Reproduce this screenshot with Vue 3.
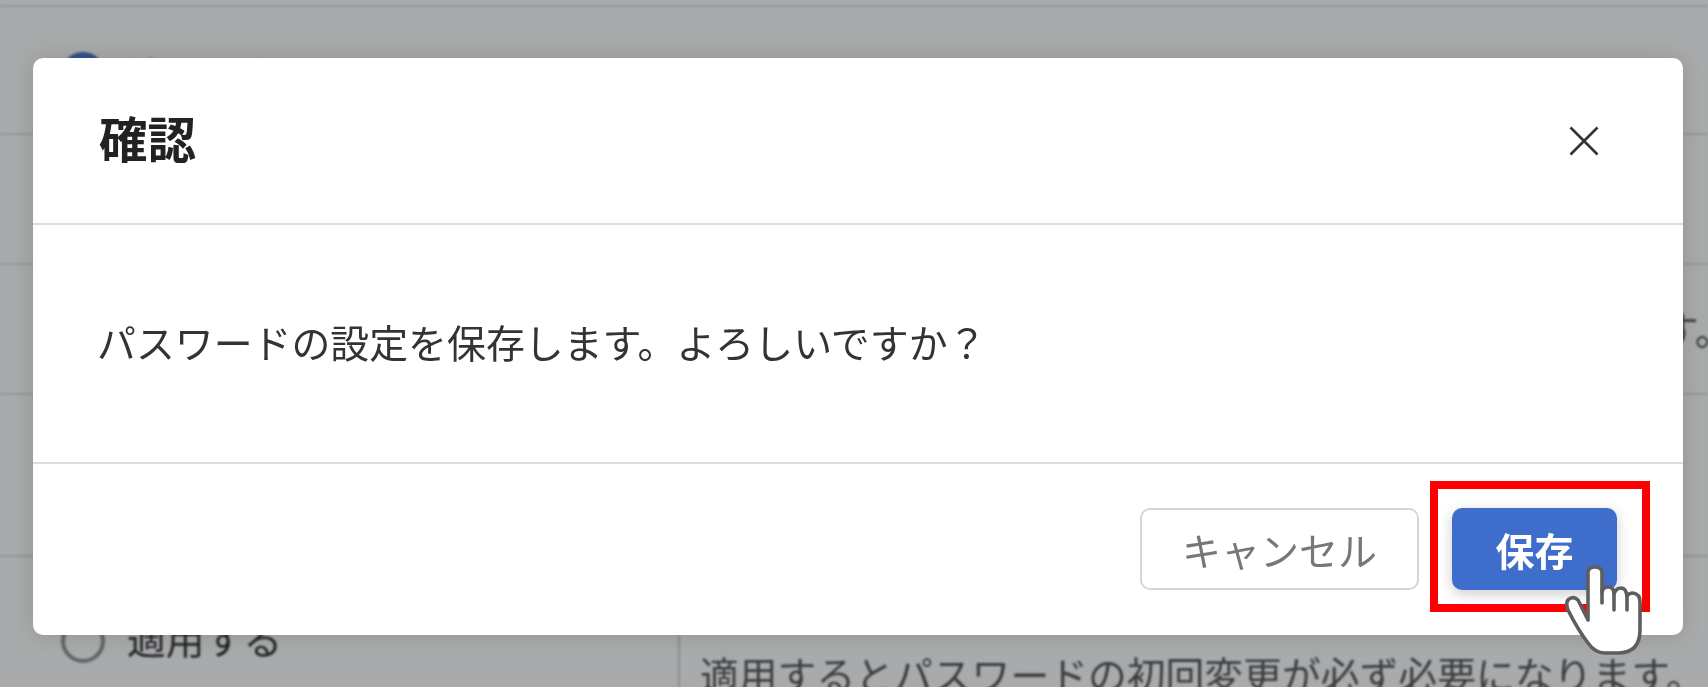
<script setup>
const rows = [
  { id: 1, cls: 'row-a', label: '適用しない', checked: true, detail: '' },
  { id: 2, cls: 'row-b', label: '', checked: false, detail: '' },
  { id: 3, cls: 'row-c', label: '', checked: false, detail: '適用しない場合は、初回変更を保存するかを選択できます。' },
  { id: 4, cls: 'row-d', label: '', checked: false, detail: '' },
  { id: 5, cls: 'row-e', label: '適用する', checked: false, detail: '適用するとパスワードの初回変更が必ず必要になります。' }
]
</script>

<template>
  <div class="screen">
    <div class="page">
      <div class="cap"></div>
      <div v-for="r in rows" :key="r.id" class="row" :class="r.cls">
        <div class="label">
          <template v-if="r.label">
            <span class="radio" :class="{ on: r.checked }"></span>
            <span>{{ r.label }}</span>
          </template>
        </div>
        <div class="detail"><span v-if="r.detail">{{ r.detail }}</span></div>
      </div>
    </div>
    <div class="overlay"></div>
    <section class="modal">
      <header class="head">
        <h2 class="title">確認</h2>
        <svg class="close" viewBox="0 0 30 30" aria-hidden="true">
          <path d="M1.5 1.5 28.5 28.5M28.5 1.5 1.5 28.5" />
        </svg>
      </header>
      <div class="body">パスワードの設定を保存します。よろしいですか？</div>
      <footer class="foot">
        <button class="btn cancel" type="button">キャンセル</button>
        <button class="btn save" type="button">保存</button>
      </footer>
    </section>
    <div class="mark"></div>
    <svg class="hand" viewBox="0 0 104 120" aria-hidden="true">
      <path class="palm" d="M48 80 L48 33 Q48 27 55 27 Q62 27 62 33 L62 52 Q63 47 68 47 Q74 47 74 54 Q76 48 81 48 Q86 48 87 56 Q89 53 93 53 Q100 54 100 62 L100 90 Q100 113 78 113 L65 113 Q55 113 48 103 Q38 90 28 70 Q25 62 29 59 Q34 56 38 60 Z" />
      <path class="palm" d="M62 50 L62 63M74 54 L74 70M87 56 L87 70" />
    </svg>
  </div>
</template>

<style scoped>
.screen {
  position: relative;
  width: 1708px;
  height: 687px;
  overflow: hidden;
  background: #fff;
  font-family: "Noto Sans CJK JP", "Noto Sans", sans-serif;
}
.page {
  display: flex;
  flex-direction: column;
  height: 687px;
  filter: blur(0.8px);
  color: #222;
  font-size: 38.8px;
  line-height: 46px;
  font-weight: 400;
}
.cap {
  height: 5px;
  flex: none;
}
.row {
  display: grid;
  grid-template-columns: 678px 1fr;
  box-sizing: border-box;
  border-top: 2px solid #dfdfdf;
  flex: none;
}
.row-a { height: 128px; }
.row-b { height: 130px; }
.row-c { height: 130px; }
.row-d { height: 162px; }
.row-e { height: 132px; }
.label {
  display: flex;
  align-items: flex-start;
  gap: 22px;
  padding-left: 61px;
}
.row-a .label { padding-top: 44px; }
.row-e .label { padding-top: 57px; }
.radio {
  flex: none;
  box-sizing: border-box;
  width: 44px;
  height: 44px;
  border-radius: 50%;
  border: 4px solid #8b8c8e;
  background: #fff;
  margin-top: 1px;
}
.row-e .radio { margin-top: 5px; }
.radio.on {
  border: 13px solid #3f6fd0;
}
.detail {
  padding-left: 20px;
  white-space: nowrap;
  color: #4a4a4a;
}
.row-c .detail { padding: 40px 0 0 12px; }
.row-e .detail {
  border-left: 2px dotted #a0a0a0;
  padding-top: 93px;
}
.overlay {
  position: absolute;
  inset: 0;
  background: rgba(40, 42, 46, 0.4);
}
.modal {
  position: absolute;
  left: 33px;
  top: 58px;
  width: 1650px;
  height: 577px;
  display: flex;
  flex-direction: column;
  background: #fff;
  border-radius: 10px;
  box-shadow: 0 0 22px rgba(0, 0, 0, 0.14);
  filter: blur(0.6px);
}
.head {
  flex: none;
  height: 167px;
  box-sizing: border-box;
  display: flex;
  align-items: center;
  justify-content: space-between;
  padding: 0 84px 0 66px;
  border-bottom: 2px solid #dcdde3;
}
.title {
  margin: 0 0 7px;
  font-size: 48.5px;
  line-height: 1.2;
  font-weight: 700;
  color: #222;
}
.close {
  width: 30px;
  height: 30px;
  fill: none;
  stroke: #333;
  stroke-width: 2.6;
}
.body {
  flex: none;
  height: 239px;
  box-sizing: border-box;
  display: flex;
  align-items: center;
  padding: 0 0 5px 64px;
  font-size: 38.9px;
  font-weight: 400;
  color: #333;
  border-bottom: 2px solid #dcdde3;
}
.foot {
  flex: 1;
  display: flex;
  justify-content: flex-end;
  align-items: flex-start;
  gap: 33px;
  padding: 44px 66px 0 0;
}
.btn {
  height: 82px;
  border-radius: 10px;
  font-family: inherit;
  font-size: 39px;
  line-height: 1;
  padding: 0;
}
.cancel {
  width: 279px;
  background: #fff;
  border: 2px solid #d4d6da;
  color: #777;
  font-weight: 400;
}
.save {
  width: 165px;
  background: #3f6dcc;
  border: none;
  color: #fff;
  font-weight: 700;
  box-shadow: 0 4px 14px rgba(0, 0, 0, 0.2);
}
.mark {
  position: absolute;
  left: 1430px;
  top: 481px;
  width: 220px;
  height: 131px;
  box-sizing: border-box;
  border: 8px solid #f00;
}
.hand {
  position: absolute;
  left: 1540px;
  top: 540px;
  width: 104px;
  height: 120px;
}
.palm {
  fill: #fff;
  stroke: #5e5e5e;
  stroke-width: 3.6;
  stroke-linecap: round;
  stroke-linejoin: round;
}
</style>

<style>
html, body { margin: 0; overflow: hidden; background: #fff; }
</style>
